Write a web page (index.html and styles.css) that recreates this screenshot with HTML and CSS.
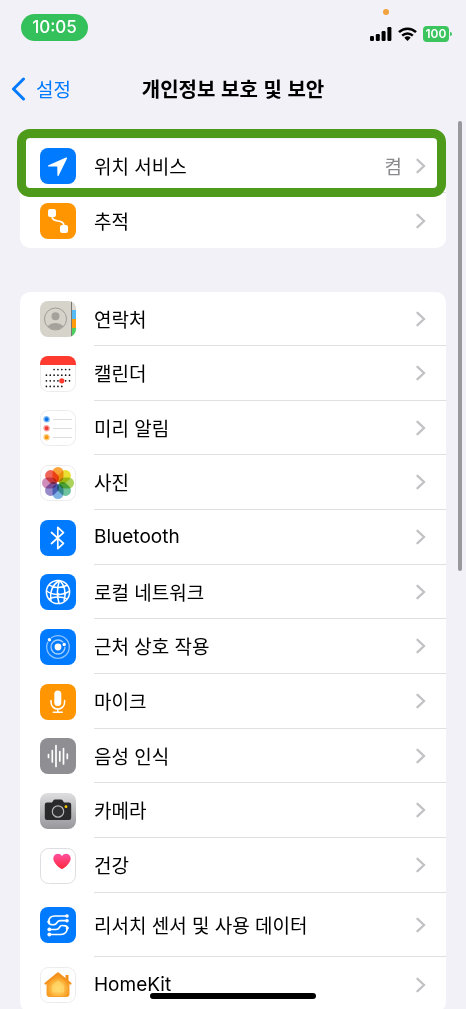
FILE: index.html
```html
<!DOCTYPE html>
<html lang="ko">
<head>
<meta charset="utf-8">
<meta name="viewport" content="width=device-width, initial-scale=1">
<title>개인정보 보호 및 보안</title>
<link rel="stylesheet" href="styles.css">
</head>
<body>
<svg class="defs" aria-hidden="true">
  <symbol id="chevron" viewBox="0 0 10 16"><path d="M1.500 1.800 8 8l-6.500 6.200" fill="none" stroke="#c2c2c5" stroke-width="2.300" stroke-linecap="round" stroke-linejoin="miter"/></symbol>
</svg>
<div class="screen">
  <div class="status">
    <span class="clock">10:05</span>
    <span class="mic-dot"></span>
    <div class="status-icons">
      <svg width="22" height="14" viewBox="0 0 22 14"><rect x="0" y="9" width="4" height="5" rx="1.200"/><rect x="5.800" y="7" width="4" height="7" rx="1.200"/><rect x="11.600" y="4" width="4" height="10" rx="1.200"/><rect x="17.400" y="0" width="4" height="14" rx="1.200"/></svg>
      <svg width="19" height="14" viewBox="0 0 19 14"><g fill="none" stroke="#000" stroke-width="2.500"><path d="M1 5.200a12.200 12.200 0 0 1 17 0"/><path d="M4.200 8.600a7.600 7.600 0 0 1 10.600 0"/></g><path d="M9.500 14 6.300 10.800a4.700 4.700 0 0 1 6.400 0z"/></svg>
      <span class="battery">100</span>
    </div>
  </div>

  <header class="nav">
    <a class="back" href="#"><svg width="15" height="24" viewBox="0 0 15 24"><path d="M12.500 2 2.500 12l10 10" fill="none" stroke="#007aff" stroke-width="3" stroke-linecap="round" stroke-linejoin="round"/></svg>설정</a>
    <h1>개인정보 보호 및 보안</h1>
  </header>

  <main class="content">
    <section class="group">
      <ul class="list">
        <li class="row"><a href="#">
          <svg class="icon" viewBox="0 0 36 36"><rect width="36" height="36" rx="8" fill="#007aff"/><path d="M26 9.500 8.500 17.200c-.7.300-.6 1.300.2 1.300l8.600.100.100 8.700c0 .8 1 1 1.300.2L27 10.400c.3-.7-.3-1.200-1-.9z" fill="#fff"/></svg>
          <span class="label"><span class="name">위치 서비스</span><span class="value">켬</span><svg class="chevron"><use href="#chevron"/></svg></span>
        </a></li>
        <li class="row"><a href="#">
          <svg class="icon" viewBox="0 0 36 36"><rect width="36" height="36" rx="8" fill="#ff9500"/><g fill="#fff"><rect x="8" y="6" width="8" height="8" rx="2"/><rect x="20" y="22" width="8" height="8" rx="2"/></g><path d="M12 13c0 8 12 2 12 10" fill="none" stroke="#fff" stroke-width="1.700"/></svg>
          <span class="label"><span class="name">추적</span><svg class="chevron"><use href="#chevron"/></svg></span>
        </a></li>
      </ul>
      <div class="highlight"></div>
    </section>

    <section class="group">
      <ul class="list">
        <li class="row"><a href="#">
          <svg class="icon" viewBox="0 0 36 36"><defs><clipPath id="cc"><rect width="36" height="36" rx="8"/></clipPath><clipPath id="ch"><circle cx="15.500" cy="18" r="10.500"/></clipPath></defs><g clip-path="url(#cc)"><path fill="#d6d3cb" d="M0 0h36v36H0z"/><path fill="#dcdad3" d="M32 0h4v9h-4z"/><path fill="#55b9f3" d="M32 9h4v9h-4z"/><path fill="#ff9a0a" d="M32 18h4v9h-4z"/><path fill="#4cd05f" d="M32 27h4v9h-4z"/><path stroke="#77756f" stroke-width="1" d="M31.500 0v36"/></g><g clip-path="url(#ch)" fill="#a5a29c"><circle cx="15.500" cy="15.300" r="4"/><ellipse cx="15.500" cy="28" rx="8.800" ry="6"/></g><circle cx="15.500" cy="18" r="11" fill="none" stroke="#a09d97" stroke-width="1"/></svg>
          <span class="label"><span class="name">연락처</span><svg class="chevron"><use href="#chevron"/></svg></span>
        </a></li>
        <li class="row"><a href="#">
          <svg class="icon" viewBox="0 0 36 36"><rect x=".5" y=".5" width="35" height="35" rx="8" fill="#fff" stroke="#ececef"/><path d="M0 9V8a8 8 0 0 1 8-8h20a8 8 0 0 1 8 8v1z" fill="#ff3b30"/><g stroke="#111" stroke-width="1.700" stroke-linecap="round" stroke-dasharray="0 3.850"><path d="M14.100 13.500h16"/><path d="M6.400 19.200h24"/><path d="M6.400 24.800h24"/><path d="M6.400 30.400h16.500"/></g><circle cx="21.800" cy="24.800" r="2.600" fill="#ff3b30"/></svg>
          <span class="label"><span class="name">캘린더</span><svg class="chevron"><use href="#chevron"/></svg></span>
        </a></li>
        <li class="row"><a href="#">
          <svg class="icon" viewBox="0 0 36 36"><rect x=".5" y=".5" width="35" height="35" rx="8" fill="#fff" stroke="#ececef"/><path d="M13 9.500h19M13 18.500h19M13 27.500h19" stroke="#dcdce0"/><g stroke-width="1.300"><circle cx="6.600" cy="9.300" r="2.600" fill="#0a74e8" stroke="#85bdf5"/><circle cx="6.600" cy="18.300" r="2.600" fill="#ee3d35" stroke="#f7a5a0"/><circle cx="6.600" cy="27.300" r="2.600" fill="#f5990d" stroke="#fad08c"/></g></svg>
          <span class="label"><span class="name">미리 알림</span><svg class="chevron"><use href="#chevron"/></svg></span>
        </a></li>
        <li class="row"><a href="#">
          <svg class="icon" viewBox="0 0 36 36"><rect x=".5" y=".5" width="35" height="35" rx="8" fill="#fff" stroke="#ececef"/><g class="petals"><rect x="12.500" y="2" width="11" height="15" rx="5.500" fill="#fb9a24"/><rect x="12.500" y="2" width="11" height="15" rx="5.500" fill="#e9dc1b" transform="rotate(45 18 18)"/><rect x="12.500" y="2" width="11" height="15" rx="5.500" fill="#a2cf4a" transform="rotate(90 18 18)"/><rect x="12.500" y="2" width="11" height="15" rx="5.500" fill="#5fbd92" transform="rotate(135 18 18)"/><rect x="12.500" y="2" width="11" height="15" rx="5.500" fill="#6faae3" transform="rotate(180 18 18)"/><rect x="12.500" y="2" width="11" height="15" rx="5.500" fill="#8b7dc4" transform="rotate(225 18 18)"/><rect x="12.500" y="2" width="11" height="15" rx="5.500" fill="#cb7fb4" transform="rotate(270 18 18)"/><rect x="12.500" y="2" width="11" height="15" rx="5.500" fill="#ee5446" transform="rotate(315 18 18)"/></g></svg>
          <span class="label"><span class="name">사진</span><svg class="chevron"><use href="#chevron"/></svg></span>
        </a></li>
        <li class="row"><a href="#">
          <svg class="icon" viewBox="0 0 36 36"><rect width="36" height="36" rx="8" fill="#007aff"/><path d="M11.500 12.500 23.500 23.300 17.800 28.700V7.300l5.700 5.400L11.500 23.500" fill="none" stroke="#fff" stroke-width="1.700" stroke-linecap="round" stroke-linejoin="round"/></svg>
          <span class="label"><span class="name latin">Bluetooth</span><svg class="chevron"><use href="#chevron"/></svg></span>
        </a></li>
        <li class="row"><a href="#">
          <svg class="icon" viewBox="0 0 36 36"><rect width="36" height="36" rx="8" fill="#007aff"/><g fill="none" stroke="#fff" stroke-width="1.500"><circle cx="18" cy="18" r="11.600"/><path d="M19.500 6.500C12 11 9.500 17 11 27M19.500 6.500c-2.500 7-2.700 15-.5 23M19.500 6.500c5 4 7 12 4.500 21"/><path d="M9 10.800c5.500 3.500 13 3.600 18.500.2M6.500 17c6.500 4.700 17 4.500 23 .2M8.800 25c5-2.500 13.500-2.600 18.600.2"/></g><g fill="#fff"><circle cx="13" cy="13" r="1.300"/><circle cx="18" cy="20.400" r="1.400"/><circle cx="24.800" cy="19.500" r="1.300"/></g></svg>
          <span class="label"><span class="name">로컬 네트워크</span><svg class="chevron"><use href="#chevron"/></svg></span>
        </a></li>
        <li class="row"><a href="#">
          <svg class="icon" viewBox="0 0 36 36"><rect width="36" height="36" rx="8" fill="#007aff"/><g fill="none" stroke="#fff" stroke-width="1.300"><circle cx="18" cy="18" r="11.300" stroke-opacity=".55"/><circle cx="18" cy="18" r="7" stroke-opacity=".65"/></g><circle cx="9.300" cy="10.700" r="2.500" fill="#007aff"/><circle cx="24.200" cy="15.500" r="2.500" fill="#007aff"/><g fill="#fff"><circle cx="18" cy="18" r="3.400"/><circle cx="9.400" cy="10.700" r="1.700"/><circle cx="24.200" cy="15.500" r="1.700"/></g></svg>
          <span class="label"><span class="name">근처 상호 작용</span><svg class="chevron"><use href="#chevron"/></svg></span>
        </a></li>
        <li class="row"><a href="#">
          <svg class="icon" viewBox="0 0 36 36"><rect width="36" height="36" rx="8" fill="#ff9500"/><rect x="14.300" y="6.500" width="7" height="15.500" rx="3.500" fill="#fff"/><path d="M11 16.500v1.800a6.800 6.800 0 0 0 13.600 0v-1.800M17.800 25.300v2.800M13.300 28.200h9" fill="none" stroke="#fff" stroke-width="1.500" stroke-linecap="round"/></svg>
          <span class="label"><span class="name">마이크</span><svg class="chevron"><use href="#chevron"/></svg></span>
        </a></li>
        <li class="row"><a href="#">
          <svg class="icon" viewBox="0 0 36 36"><rect width="36" height="36" rx="8" fill="#8e8e93"/><path d="M8.500 16.500v3M12.300 12.500v11.500M16 7.500v21M19.800 13.500v9.500M23.500 10.500v15.500M27.300 16v4.500" stroke="#fff" stroke-width="1.700" stroke-linecap="round"/></svg>
          <span class="label"><span class="name">음성 인식</span><svg class="chevron"><use href="#chevron"/></svg></span>
        </a></li>
        <li class="row"><a href="#">
          <svg class="icon" viewBox="0 0 36 36"><defs><linearGradient id="cam" x2="0" y2="1"><stop stop-color="#dedee0"/><stop offset="1" stop-color="#96969b"/></linearGradient></defs><rect width="36" height="36" rx="8" fill="url(#cam)"/><path d="M7 9.500h5l1.500-2.200q.5-.8 1.500-.8h6q1 0 1.500.8L24 9.500h5q2.200 0 2.200 2.200v13q0 2.200-2.200 2.200H7q-2.200 0-2.200-2.200v-13Q4.800 9.500 7 9.500z" fill="#29292b"/><circle cx="18" cy="18.500" r="5.700" fill="#303033" stroke="#b5b5b9" stroke-width="1.200"/><circle cx="26" cy="13.700" r="1.400" fill="#ffcc00"/></svg>
          <span class="label"><span class="name">카메라</span><svg class="chevron"><use href="#chevron"/></svg></span>
        </a></li>
        <li class="row"><a href="#">
          <svg class="icon" viewBox="0 0 36 36"><defs><linearGradient id="hrt" x2="0" y2="1"><stop stop-color="#ff4fa0"/><stop offset="1" stop-color="#ff2637"/></linearGradient></defs><rect x=".5" y=".5" width="35" height="35" rx="8" fill="#fff" stroke="#dedee2"/><path d="M22 21.300C18 18.800 13.300 14.700 13.300 10.500c0-5.300 6.500-6.200 8.700-2.300 2.200-3.900 8.700-3 8.700 2.300 0 4.200-4.700 8.300-8.700 10.800z" fill="url(#hrt)"/></svg>
          <span class="label"><span class="name">건강</span><svg class="chevron"><use href="#chevron"/></svg></span>
        </a></li>
        <li class="row row-tall"><a href="#">
          <svg class="icon" viewBox="0 0 36 36"><rect width="36" height="36" rx="8" fill="#007aff"/><g fill="none" stroke="#fff" stroke-width="1.700"><path d="M27 9H14.500c-3.500 0-5.500 2-6 5.500"/><path d="M27 13.700H20c-4 0-2.500 4-6 4-3 .2-5.500-.3-5.500-3"/><path d="M9.500 22.500H16c4.500 0 2.500-4 6-4 3 0 5.300 0 5.300 2.500"/><path d="M9.500 27.500H21c4 0 6-2.500 6.300-6.500"/></g><g fill="#fff"><circle cx="27" cy="9" r="1.800"/><circle cx="27" cy="13.700" r="1.800"/><circle cx="8.800" cy="14.800" r="1.500"/><circle cx="9.300" cy="22.400" r="1.900"/><circle cx="9.300" cy="27.500" r="1.900"/><circle cx="27.300" cy="21" r="1.600"/></g></svg>
          <span class="label"><span class="name">리서치 센서 및 사용 데이터</span><svg class="chevron"><use href="#chevron"/></svg></span>
        </a></li>
        <li class="row"><a href="#">
          <svg class="icon" viewBox="0 0 36 36"><defs><radialGradient id="hm" cy=".65"><stop stop-color="#ffd96a"/><stop offset=".6" stop-color="#fdbb45"/><stop offset="1" stop-color="#f79a22"/></radialGradient></defs><rect x=".5" y=".5" width="35" height="35" rx="8" fill="#fff" stroke="#ececef"/><path d="M25.500 8h3v8h-3z" fill="#f0901b"/><path d="M18 6.500 29 15.500v12q0 2-2 2H9q-2 0-2-2v-12z" fill="url(#hm)" stroke="#f5a02c" stroke-width="1"/><path d="M5.500 16.500 18 6.300l12.500 10.200" fill="none" stroke="#f3921c" stroke-width="2.200" stroke-linecap="round" stroke-linejoin="round"/><path d="M18 13.500l6 5v7H12v-7z" fill="#ffdc70" opacity=".6"/></svg>
          <span class="label"><span class="name latin">HomeKit</span><svg class="chevron"><use href="#chevron"/></svg></span>
        </a></li>
      </ul>
    </section>
  </main>
  <div class="scrollbar"></div>
  <div class="home-indicator"></div>
</div>
</body>
</html>
```
FILE: styles.css
```css
* {
  box-sizing: border-box;
}

body {
  margin: 0;
  background: #f2f1f7;
  color: #000;
  font-family: "Noto Sans CJK KR", sans-serif;
  font-size: 19px;
  line-height: 28px;
}

a {
  color: inherit;
  text-decoration: none;
}

.defs {
  position: absolute;
  width: 0;
  height: 0;
}

.screen {
  position: relative;
  height: 100vh;
  overflow: hidden;
}

.status {
  position: relative;
  display: flex;
  justify-content: space-between;
  align-items: flex-start;
  height: 64px;
  padding: 14px 17px 0 21px;
  font-family: Inter, sans-serif;
}

.latin {
  font-family: Inter, sans-serif;
}

.clock {
  width: 67px;
  border-radius: 14px;
  background: #34c05a;
  color: #fff;
  font-size: 17px;
  font-weight: 500;
  line-height: 27px;
  text-align: center;
}

.mic-dot {
  position: absolute;
  top: 9px;
  right: 77px;
  width: 6px;
  height: 6px;
  border-radius: 50%;
  background: #f2a23c;
}

.status-icons {
  display: flex;
  align-items: center;
  gap: 6px;
  margin-top: 12px;
}

.battery {
  position: relative;
  width: 26px;
  border-radius: 4px;
  background: #3cc45f;
  color: #fff;
  font-size: 12px;
  font-weight: 600;
  line-height: 16px;
  text-align: center;
}

.battery::after {
  content: "";
  position: absolute;
  top: 6px;
  right: -3px;
  width: 2px;
  height: 4px;
  border-radius: 0 2px 2px 0;
  background: #3cc45f;
}

.nav {
  display: grid;
  grid-template-columns: 1fr auto 1fr;
  align-items: center;
  height: 50px;
  padding: 0 11px;
}

.back {
  display: flex;
  align-items: center;
  gap: 10px;
  color: #007aff;
}

h1 {
  margin: 0;
  font-size: 20px;
  font-weight: 600;
}

.content {
  display: flex;
  flex-direction: column;
  gap: 44px;
  padding: 25px 20px 0;
}

.group {
  position: relative;
}

.list {
  margin: 0;
  padding: 0;
  list-style: none;
  border-radius: 10px;
  background: #fff;
}

.row,
.row a {
  display: flex;
}

.row {
  min-height: 55px;
}

.row:first-child,
.row:nth-child(3n) {
  min-height: 54px;
}

.row.row-tall {
  min-height: 64px;
}

.row a {
  flex: 1;
  align-items: center;
  gap: 18px;
  padding-left: 20px;
}

.icon {
  flex: none;
  width: 36px;
  height: 36px;
}

.label {
  display: flex;
  flex: 1;
  align-items: center;
  align-self: stretch;
  gap: 14px;
  padding-right: 20px;
  border-bottom: 1px solid #e0e0e3;
}

.row:last-child .label {
  border-bottom: 0;
}

.name {
  flex: 1;
}

.value {
  color: #8a8a8e;
}

.chevron {
  width: 10px;
  height: 16px;
}

.highlight {
  position: absolute;
  top: -10px;
  right: 0;
  left: -3px;
  height: 68px;
  border: 9px solid #4e9a1b;
  border-radius: 13px;
}

.petals rect {
  mix-blend-mode: multiply;
  opacity: 0.9;
}

.scrollbar {
  position: absolute;
  top: 121px;
  right: 4px;
  width: 4px;
  height: 450px;
  border-radius: 2px;
  background: #98989d;
}

.home-indicator {
  position: absolute;
  bottom: 10px;
  left: 50%;
  width: 166px;
  height: 6px;
  margin-left: -83px;
  border-radius: 3px;
  background: #000;
}
```
